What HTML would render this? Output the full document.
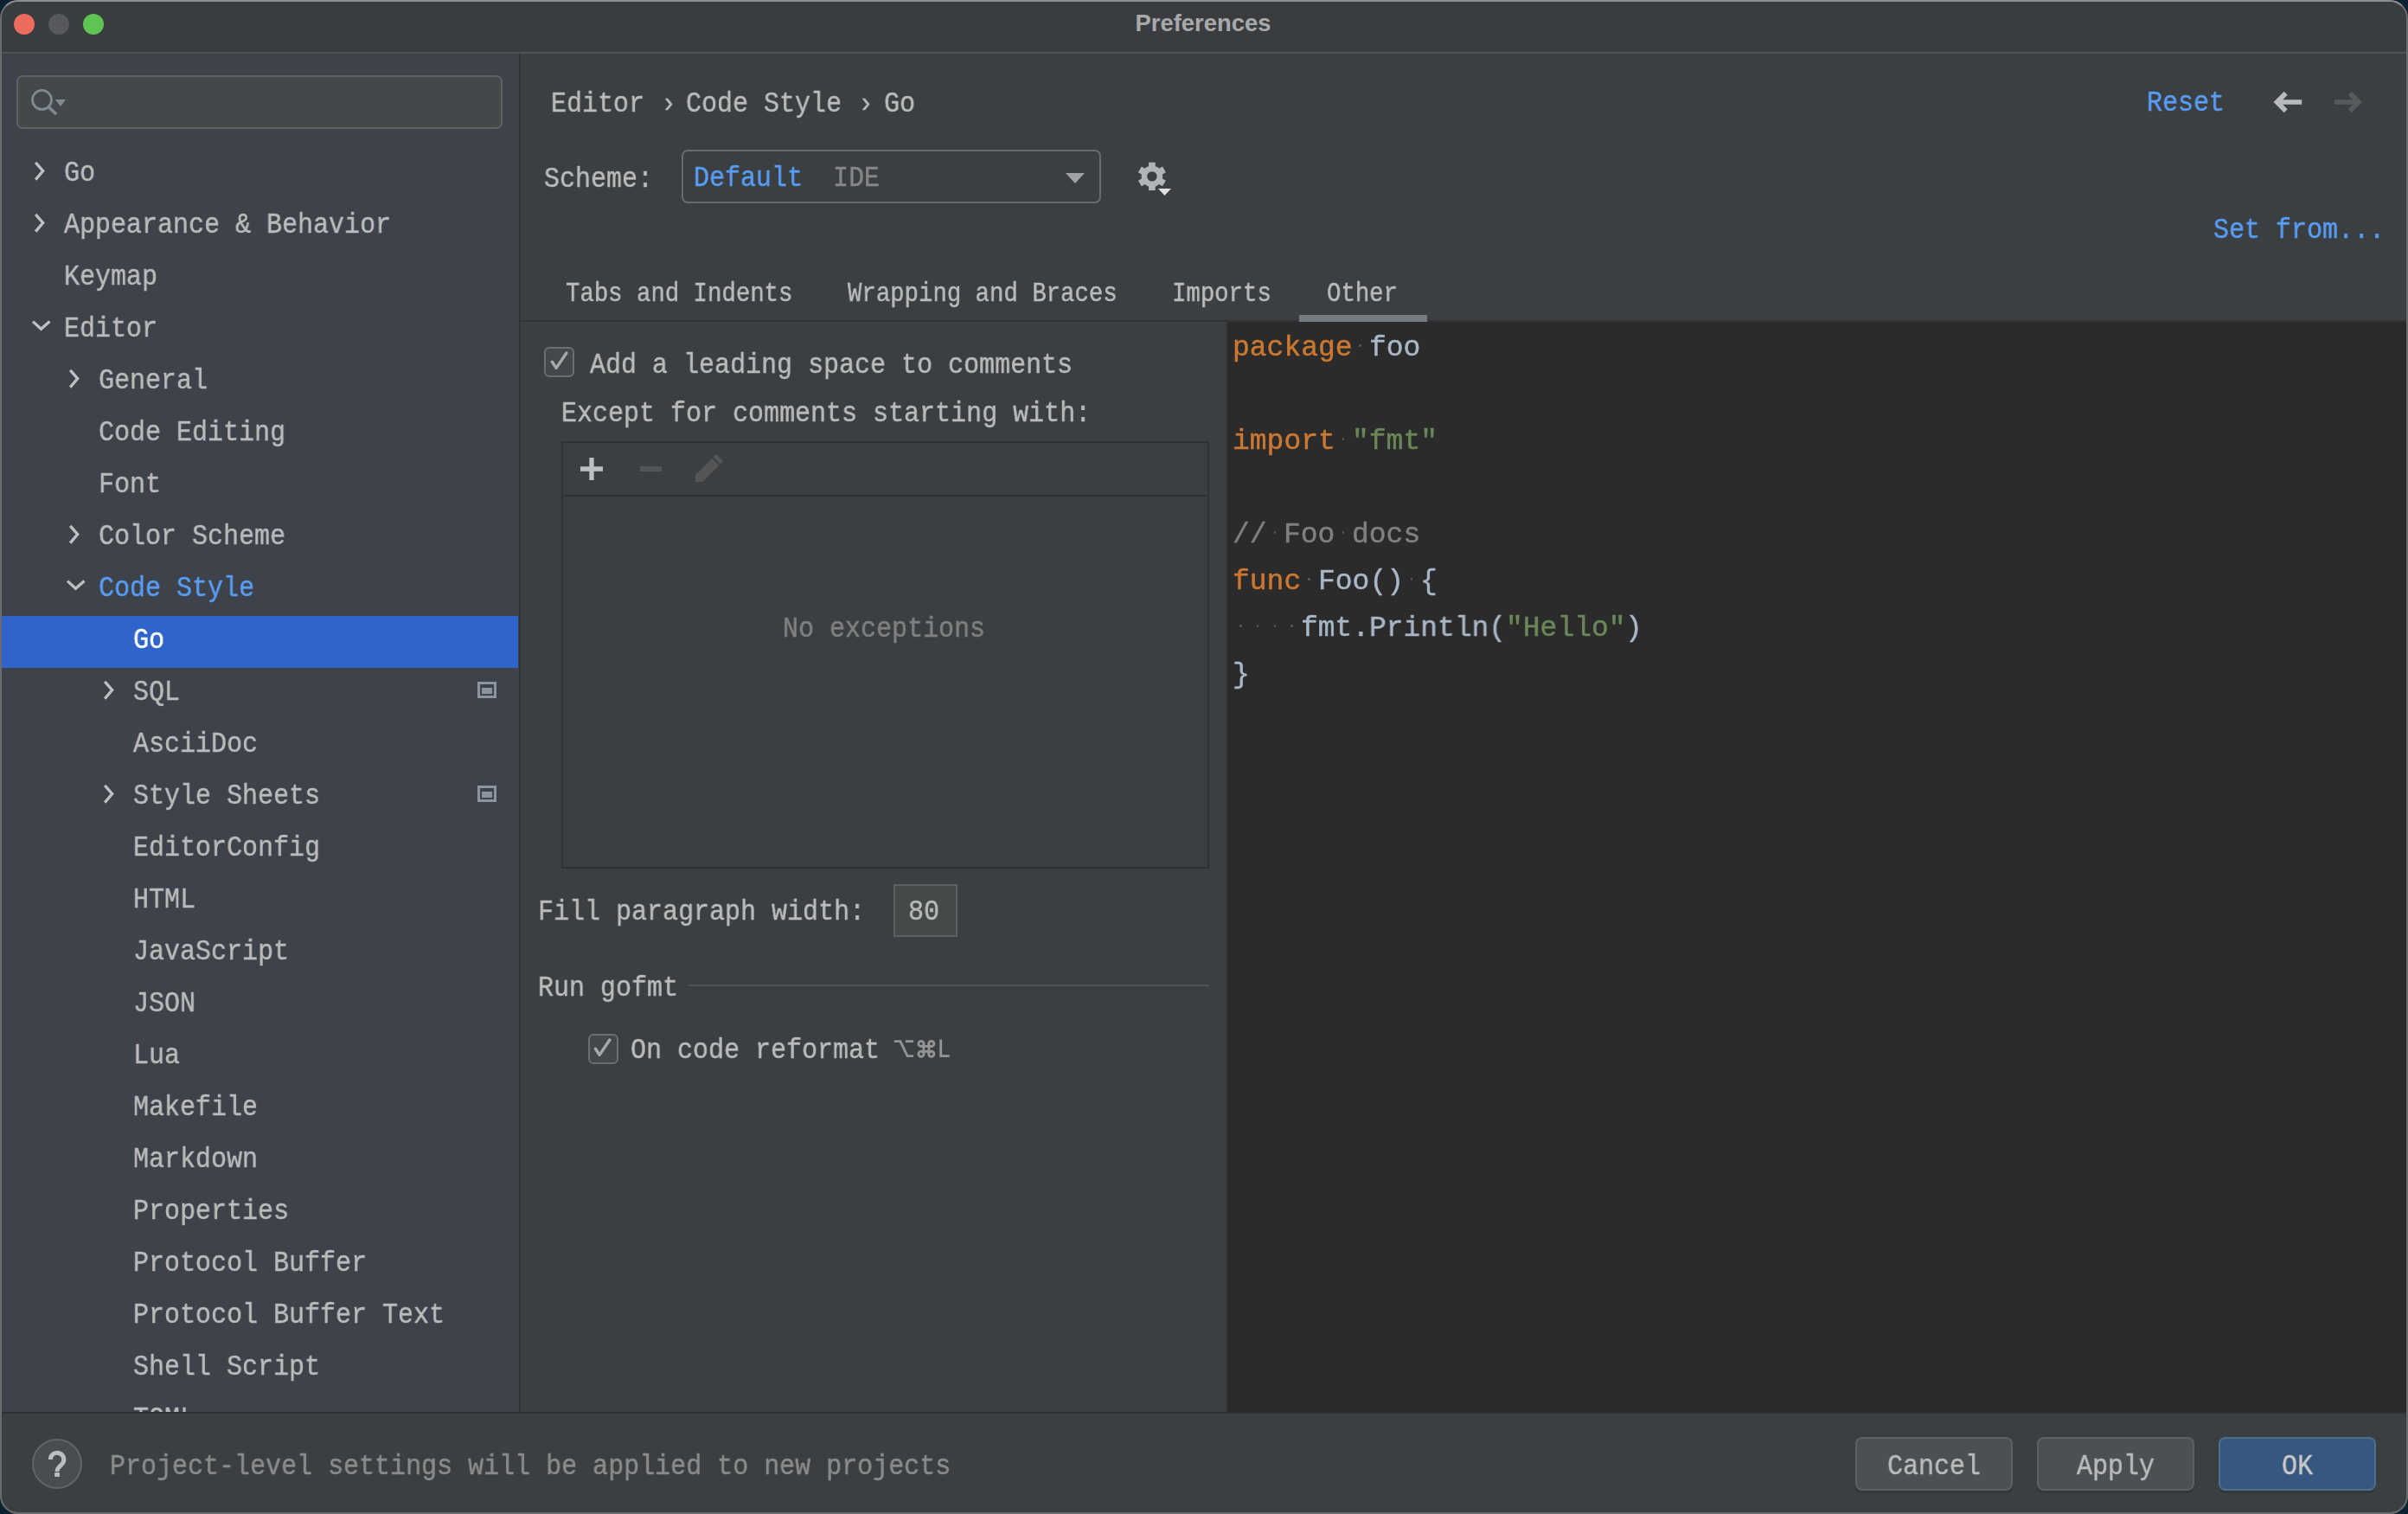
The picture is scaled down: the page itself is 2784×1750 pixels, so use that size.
<!DOCTYPE html>
<html><head><meta charset="utf-8"><style>
html,body{margin:0;padding:0;}
body{width:2784px;height:1750px;overflow:hidden;background:#0b2230;position:relative;font-family:"Liberation Mono",monospace;}
#win{position:absolute;left:0;top:0;width:2784px;height:1750px;border-radius:21px;overflow:hidden;background:#3c3f41;}
#frame{position:absolute;left:0;top:0;width:2784px;height:1750px;border-radius:21px;box-sizing:border-box;border:2px solid #6a6b6d;border-top-color:#8e8f91;pointer-events:none;}
.t{position:absolute;white-space:pre;line-height:44px;transform-origin:0 0;will-change:transform;-webkit-text-stroke:0.45px currentColor;}
#title{position:absolute;left:0;top:0;width:2784px;height:60px;background:#3a3d40;border-bottom:2px solid #515254;}
.dot{position:absolute;width:24px;height:24px;border-radius:50%;}
#ttl{position:absolute;left:0;width:2782px;top:10px;text-align:center;font-family:"Liberation Sans",sans-serif;font-weight:bold;font-size:27.4px;line-height:34px;color:#a8a9ab;}
#side{position:absolute;left:0;top:62px;width:600px;height:1570px;background:#3e424b;}
#sdiv{position:absolute;left:600px;top:62px;width:1px;height:1570px;background:#2f2f2e;border-right:1px solid #373838;}
#treeclip{position:absolute;left:0;top:61px;width:600px;height:1571px;overflow:hidden;}
#search{position:absolute;left:19px;top:87px;width:562px;height:62px;box-sizing:border-box;border:2px solid #5f6062;border-radius:7px;background:#45484a;}
#main{position:absolute;left:602px;top:62px;width:2182px;height:1570px;background:#3c3f41;}
#combo{position:absolute;left:788px;top:173px;width:485px;height:62px;box-sizing:border-box;border:2.4px solid #6a6a6a;border-radius:7px;}
#tabline{position:absolute;left:601px;top:370px;width:2183px;height:2px;background:#313335;}
.cb{position:absolute;width:35px;height:35px;box-sizing:border-box;border:2.7px solid #6d6d6d;border-radius:6px;background:#43484b;}

#table{position:absolute;left:649px;top:510px;width:749px;height:494px;box-sizing:border-box;border:2px solid #2f3133;}
#num{position:absolute;left:1033px;top:1022px;width:74px;height:61px;box-sizing:border-box;border:2px solid #5e6060;background:#45494a;}
#editor{position:absolute;left:1418px;top:372px;width:1366px;height:1260px;background:#2b2b2b;border-left:2px solid #303030;box-sizing:border-box;}
.ws{position:absolute;width:2.6px;height:2.6px;border-radius:50%;background:#5a5a5a;}
#bottom{position:absolute;left:0;top:1632px;width:2784px;height:118px;background:#3c3f41;border-top:2px solid #2f3133;}
#help{position:absolute;left:37px;top:1663px;width:58px;height:58px;box-sizing:border-box;border:2px solid #626466;border-radius:50%;background:#4a4d50;color:#c4c4c4;font-family:"Liberation Sans",sans-serif;font-weight:bold;font-size:34px;line-height:53px;text-align:center;}
.btn{position:absolute;top:1661px;width:182px;height:62px;box-sizing:border-box;border:2px solid #5e6062;border-radius:8px;background:#4c5052;box-shadow:0 3px 0 #35373a;}
.btn.ok{background:#365880;border-color:#4c708c;color:#dddddd;}
</style></head><body>
<div id="win">
<div id="title"></div><div class="dot" style="left:16px;top:16px;background:#ec6a5e"></div><div class="dot" style="left:56px;top:16px;background:#56585b"></div><div class="dot" style="left:96px;top:16px;background:#5fc454"></div><div id="ttl">Preferences</div><div id="side"></div><div id="sdiv"></div><div id="search"></div><svg style="position:absolute;left:34px;top:100px" width="44" height="36" viewBox="0 0 44 36">
<circle cx="14.5" cy="15.4" r="11" fill="none" stroke="#7f8b91" stroke-width="2.8"/>
<line x1="22" y1="23.5" x2="31" y2="32" stroke="#7f8b91" stroke-width="3.6"/>
<path d="M29.8 15 L42 15 L36 23 Z" fill="#7f8b91"/>
</svg><div id="treeclip"><div class="t" style="left:73.5px;top:117.3px;font-size:34px;transform:scaleX(0.8824);color:#bbbbbb;">Go</div>
<svg style="position:absolute;left:38px;top:124px" width="18" height="28" viewBox="0 0 18 28"><path d="M3.2 2.9 L11.7 12.6 L3.2 22.6" fill="none" stroke="#bfc0c2" stroke-width="3.3"/></svg><div class="t" style="left:73.5px;top:177.3px;font-size:34px;transform:scaleX(0.8824);color:#bbbbbb;">Appearance &amp; Behavior</div>
<svg style="position:absolute;left:38px;top:184px" width="18" height="28" viewBox="0 0 18 28"><path d="M3.2 2.9 L11.7 12.6 L3.2 22.6" fill="none" stroke="#bfc0c2" stroke-width="3.3"/></svg><div class="t" style="left:73.5px;top:237.3px;font-size:34px;transform:scaleX(0.8824);color:#bbbbbb;">Keymap</div>
<div class="t" style="left:73.5px;top:297.3px;font-size:34px;transform:scaleX(0.8824);color:#bbbbbb;">Editor</div>
<svg style="position:absolute;left:35px;top:307px" width="28" height="18" viewBox="0 0 28 18"><path d="M3 3.6 L12.5 12.3 L22.5 3.4" fill="none" stroke="#bfc0c2" stroke-width="3.3"/></svg><div class="t" style="left:113.5px;top:357.3px;font-size:34px;transform:scaleX(0.8824);color:#bbbbbb;">General</div>
<svg style="position:absolute;left:78px;top:364px" width="18" height="28" viewBox="0 0 18 28"><path d="M3.2 2.9 L11.7 12.6 L3.2 22.6" fill="none" stroke="#bfc0c2" stroke-width="3.3"/></svg><div class="t" style="left:113.5px;top:417.3px;font-size:34px;transform:scaleX(0.8824);color:#bbbbbb;">Code Editing</div>
<div class="t" style="left:113.5px;top:477.3px;font-size:34px;transform:scaleX(0.8824);color:#bbbbbb;">Font</div>
<div class="t" style="left:113.5px;top:537.3px;font-size:34px;transform:scaleX(0.8824);color:#bbbbbb;">Color Scheme</div>
<svg style="position:absolute;left:78px;top:544px" width="18" height="28" viewBox="0 0 18 28"><path d="M3.2 2.9 L11.7 12.6 L3.2 22.6" fill="none" stroke="#bfc0c2" stroke-width="3.3"/></svg><div class="t" style="left:113.5px;top:597.3px;font-size:34px;transform:scaleX(0.8824);color:#589df6;">Code Style</div>
<svg style="position:absolute;left:75px;top:607px" width="28" height="18" viewBox="0 0 28 18"><path d="M3 3.6 L12.5 12.3 L22.5 3.4" fill="none" stroke="#bfc0c2" stroke-width="3.3"/></svg><div style="position:absolute;left:0;top:651px;width:599px;height:60px;background:#2f65ca"></div><div class="t" style="left:153.5px;top:657.3px;font-size:34px;transform:scaleX(0.8824);color:#ffffff;">Go</div>
<div class="t" style="left:153.5px;top:717.3px;font-size:34px;transform:scaleX(0.8824);color:#bbbbbb;">SQL</div>
<svg style="position:absolute;left:118px;top:724px" width="18" height="28" viewBox="0 0 18 28"><path d="M3.2 2.9 L11.7 12.6 L3.2 22.6" fill="none" stroke="#bfc0c2" stroke-width="3.3"/></svg><svg style="position:absolute;left:552px;top:727px" width="22" height="19" viewBox="0 0 22 19"><rect x="1.5" y="1.5" width="19" height="16" fill="none" stroke="#8a959d" stroke-width="3"/><rect x="5" y="7" width="12" height="7" fill="#8a959d"/></svg><div class="t" style="left:153.5px;top:777.3px;font-size:34px;transform:scaleX(0.8824);color:#bbbbbb;">AsciiDoc</div>
<div class="t" style="left:153.5px;top:837.3px;font-size:34px;transform:scaleX(0.8824);color:#bbbbbb;">Style Sheets</div>
<svg style="position:absolute;left:118px;top:844px" width="18" height="28" viewBox="0 0 18 28"><path d="M3.2 2.9 L11.7 12.6 L3.2 22.6" fill="none" stroke="#bfc0c2" stroke-width="3.3"/></svg><svg style="position:absolute;left:552px;top:847px" width="22" height="19" viewBox="0 0 22 19"><rect x="1.5" y="1.5" width="19" height="16" fill="none" stroke="#8a959d" stroke-width="3"/><rect x="5" y="7" width="12" height="7" fill="#8a959d"/></svg><div class="t" style="left:153.5px;top:897.3px;font-size:34px;transform:scaleX(0.8824);color:#bbbbbb;">EditorConfig</div>
<div class="t" style="left:153.5px;top:957.3px;font-size:34px;transform:scaleX(0.8824);color:#bbbbbb;">HTML</div>
<div class="t" style="left:153.5px;top:1017.3px;font-size:34px;transform:scaleX(0.8824);color:#bbbbbb;">JavaScript</div>
<div class="t" style="left:153.5px;top:1077.3px;font-size:34px;transform:scaleX(0.8824);color:#bbbbbb;">JSON</div>
<div class="t" style="left:153.5px;top:1137.3px;font-size:34px;transform:scaleX(0.8824);color:#bbbbbb;">Lua</div>
<div class="t" style="left:153.5px;top:1197.3px;font-size:34px;transform:scaleX(0.8824);color:#bbbbbb;">Makefile</div>
<div class="t" style="left:153.5px;top:1257.3px;font-size:34px;transform:scaleX(0.8824);color:#bbbbbb;">Markdown</div>
<div class="t" style="left:153.5px;top:1317.3px;font-size:34px;transform:scaleX(0.8824);color:#bbbbbb;">Properties</div>
<div class="t" style="left:153.5px;top:1377.3px;font-size:34px;transform:scaleX(0.8824);color:#bbbbbb;">Protocol Buffer</div>
<div class="t" style="left:153.5px;top:1437.3px;font-size:34px;transform:scaleX(0.8824);color:#bbbbbb;">Protocol Buffer Text</div>
<div class="t" style="left:153.5px;top:1497.3px;font-size:34px;transform:scaleX(0.8824);color:#bbbbbb;">Shell Script</div>
<div class="t" style="left:153.5px;top:1557.3px;font-size:34px;transform:scaleX(0.8824);color:#bbbbbb;">TOML</div>
</div><div id="main"></div><div class="t" style="left:637.0px;top:97.8px;font-size:34px;transform:scaleX(0.8824);color:#bbbbbb;">Editor</div>
<div class="t" style="left:764.0px;top:97.8px;font-size:34px;transform:scaleX(0.8824);color:#bbbbbb;">›</div>
<div class="t" style="left:793.0px;top:97.8px;font-size:34px;transform:scaleX(0.8824);color:#bbbbbb;">Code Style</div>
<div class="t" style="left:992.0px;top:97.8px;font-size:34px;transform:scaleX(0.8824);color:#bbbbbb;">›</div>
<div class="t" style="left:1021.5px;top:97.8px;font-size:34px;transform:scaleX(0.8824);color:#bbbbbb;">Go</div>
<div class="t" style="left:2482.3px;top:97.3px;font-size:34px;transform:scaleX(0.8824);color:#589df6;">Reset</div>
<svg style="position:absolute;left:2615px;top:95px" width="130" height="45" viewBox="0 0 130 45">
<path d="M27.7 12.8 L17.5 23 L27.7 33.2 M17.5 23 L46.2 23" fill="none" stroke="#b9babb" stroke-width="5.6"/>
<path d="M101.9 12.8 L112.1 23 L101.9 33.2 M112.1 23 L84 23" fill="none" stroke="#58595a" stroke-width="5.6"/></svg><div class="t" style="left:629.0px;top:185.0px;font-size:34px;transform:scaleX(0.8824);color:#bbbbbb;">Scheme:</div>
<div id="combo"></div><div class="t" style="left:802.3px;top:183.5px;font-size:34px;transform:scaleX(0.8824);color:#589df6;">Default</div>
<div class="t" style="left:963.0px;top:183.5px;font-size:34px;transform:scaleX(0.8824);color:#878787;">IDE</div>
<svg style="position:absolute;left:1230px;top:199px" width="26" height="14" viewBox="0 0 26 14"><path d="M2 1 L24 1 L13 13 Z" fill="#a0a2a6"/></svg><svg style="position:absolute;left:1312px;top:184px" width="48" height="46" viewBox="0 0 48 46">
<g transform="translate(19.9,19.9)" fill="#b3b4b6"><circle r="12.3"/><rect x="-3.85" y="-16.2" width="7.7" height="32.4" transform="rotate(0)"/><rect x="-3.85" y="-16.2" width="7.7" height="32.4" transform="rotate(60)"/><rect x="-3.85" y="-16.2" width="7.7" height="32.4" transform="rotate(120)"/><circle r="5.7" fill="#3c3f41"/></g>
<path d="M27 34 L42 34 L34.5 42 Z" fill="#e0e0e0"/>
</svg><div class="t" style="left:2559.0px;top:243.5px;font-size:34px;transform:scaleX(0.8824);color:#589df6;">Set from...</div>
<div id="tabline"></div><div class="t" style="left:653.5px;top:317.9px;font-size:32px;transform:scaleX(0.8542);color:#bbbbbb;">Tabs and Indents</div>
<div class="t" style="left:979.5px;top:317.9px;font-size:32px;transform:scaleX(0.8542);color:#bbbbbb;">Wrapping and Braces</div>
<div class="t" style="left:1355.0px;top:317.9px;font-size:32px;transform:scaleX(0.8542);color:#bbbbbb;">Imports</div>
<div class="t" style="left:1534.0px;top:317.9px;font-size:32px;transform:scaleX(0.8542);color:#bbbbbb;">Other</div>
<div style="position:absolute;left:1502px;top:364px;width:148px;height:8px;background:#747a80"></div><div class="cb" style="left:629.3px;top:401px"><svg style="position:absolute;left:-2.7px;top:-2.7px" width="35" height="35" viewBox="0 0 35 35"><path d="M9.4 18.2 L14.1 25.4 L25.9 8" fill="none" stroke="#a9a9a9" stroke-width="3.4" stroke-linecap="round" stroke-linejoin="round"/></svg></div><div class="t" style="left:682.0px;top:400.3px;font-size:34px;transform:scaleX(0.8824);color:#bbbbbb;">Add a leading space to comments</div>
<div class="t" style="left:648.5px;top:455.8px;font-size:34px;transform:scaleX(0.8824);color:#bbbbbb;">Except for comments starting with:</div>
<div id="table"></div><div style="position:absolute;left:649px;top:572px;width:748px;height:2px;background:#2f3133"></div><svg style="position:absolute;left:668px;top:525px" width="32" height="34" viewBox="0 0 32 34">
<path d="M3 17 L29 17 M16 4 L16 30" stroke="#bebfc1" stroke-width="5.3"/></svg><div style="position:absolute;left:740px;top:539.2px;width:25px;height:5.5px;background:#545556"></div><svg style="position:absolute;left:802px;top:522px" width="38" height="38" viewBox="0 0 38 38">
<path d="M2 35 L2 27 L26 3 L34 11 L10 35 Z" fill="#555556"/><path d="M22 7 L30 15" stroke="#3c3f41" stroke-width="2"/></svg><div class="t" style="left:905.0px;top:705.2px;font-size:34px;transform:scaleX(0.8824);color:#808080;">No exceptions</div>
<div class="t" style="left:622.0px;top:1031.8px;font-size:34px;transform:scaleX(0.8824);color:#bbbbbb;">Fill paragraph width:</div>
<div id="num"></div><div class="t" style="left:1050.0px;top:1031.8px;font-size:34px;transform:scaleX(0.8824);color:#bbbbbb;">80</div>
<div class="t" style="left:622.0px;top:1119.7px;font-size:34px;transform:scaleX(0.8824);color:#bbbbbb;">Run gofmt</div>
<div style="position:absolute;left:796px;top:1138px;width:602px;height:2px;background:#505254"></div><div class="cb" style="left:679.5px;top:1195px"><svg style="position:absolute;left:-2.7px;top:-2.7px" width="35" height="35" viewBox="0 0 35 35"><path d="M9.4 18.2 L14.1 25.4 L25.9 8" fill="none" stroke="#a9a9a9" stroke-width="3.4" stroke-linecap="round" stroke-linejoin="round"/></svg></div><div class="t" style="left:729.0px;top:1192.3px;font-size:34px;transform:scaleX(0.8824);color:#bbbbbb;">On code reformat</div>
<svg style="position:absolute;left:1030px;top:1198px" width="72" height="30" viewBox="0 0 72 30">
<g fill="none" stroke="#949494" stroke-width="2.8">
<path d="M3.8 5.6 H10.9 L19.1 22.7 H26.1 M16.9 5.6 H26.1"/>
<path d="M37.9 8.4 V20.2 M43.9 8.4 V20.2 M35 11.3 H46.8 M35 17.3 H46.8"/>
<circle cx="35" cy="8.4" r="3.1"/><circle cx="46.8" cy="8.4" r="3.1"/><circle cx="35" cy="20.2" r="3.1"/><circle cx="46.8" cy="20.2" r="3.1"/>
<path d="M57.7 3.6 V22.7 H67.7"/>
</g></svg><div id="editor"></div><div class="t" style="left:1424.8px;top:381.2px;font-size:33px;transform:scaleX(0.9975);color:#cc7832;">package</div>
<div class="ws" style="left:1571.4px;top:398px"></div><div class="t" style="left:1582.8px;top:381.2px;font-size:33px;transform:scaleX(0.9975);color:#a9b7c6;">foo</div>
<div class="t" style="left:1424.8px;top:489.2px;font-size:33px;transform:scaleX(0.9975);color:#cc7832;">import</div>
<div class="ws" style="left:1551.7px;top:506px"></div><div class="t" style="left:1563.0px;top:489.2px;font-size:33px;transform:scaleX(0.9975);color:#6a8759;">"fmt"</div>
<div class="t" style="left:1424.8px;top:597.2px;font-size:33px;transform:scaleX(0.9975);color:#808080;">//</div>
<div class="ws" style="left:1472.7px;top:614px"></div><div class="t" style="left:1484.0px;top:597.2px;font-size:33px;transform:scaleX(0.9975);color:#808080;">Foo</div>
<div class="ws" style="left:1551.7px;top:614px"></div><div class="t" style="left:1563.0px;top:597.2px;font-size:33px;transform:scaleX(0.9975);color:#808080;">docs</div>
<div class="t" style="left:1424.8px;top:651.2px;font-size:33px;transform:scaleX(0.9975);color:#cc7832;">func</div>
<div class="ws" style="left:1512.2px;top:668px"></div><div class="t" style="left:1523.5px;top:651.2px;font-size:33px;transform:scaleX(0.9975);color:#a9b7c6;">Foo()</div>
<div class="ws" style="left:1630.7px;top:668px"></div><div class="t" style="left:1642.0px;top:651.2px;font-size:33px;transform:scaleX(0.9975);color:#a9b7c6;">{</div>
<div class="ws" style="left:1433.2px;top:722px"></div><div class="ws" style="left:1452.9px;top:722px"></div><div class="ws" style="left:1472.7px;top:722px"></div><div class="ws" style="left:1492.4px;top:722px"></div><div class="t" style="left:1503.8px;top:705.2px;font-size:33px;transform:scaleX(0.9975);color:#a9b7c6;">fmt.Println(</div>
<div class="t" style="left:1740.8px;top:705.2px;font-size:33px;transform:scaleX(0.9975);color:#6a8759;">"Hello"</div>
<div class="t" style="left:1879.0px;top:705.2px;font-size:33px;transform:scaleX(0.9975);color:#a9b7c6;">)</div>
<div class="t" style="left:1424.8px;top:759.2px;font-size:33px;transform:scaleX(0.9975);color:#a9b7c6;">}</div>
<div id="bottom"></div><div id="help"></div><svg style="position:absolute;left:30px;top:1655px" width="80" height="75" viewBox="0 0 80 75">
<path d="M28.3 32 A7.75 7.75 0 1 1 41.5 37.5 L38.3 40.7 Q36 43 36 45.5 L36 46" fill="none" stroke="#bdbec0" stroke-width="5"/>
<rect x="33.2" y="47" width="5.7" height="5" fill="#bdbec0"/></svg><div class="t" style="left:127.0px;top:1673.0px;font-size:34px;transform:scaleX(0.8824);color:#8b8b8b;">Project-level settings will be applied to new projects</div>
<div class="btn" style="left:2145px"></div><div class="t" style="left:2182.0px;top:1673.1px;font-size:34px;transform:scaleX(0.8824);color:#bbbbbb;">Cancel</div>
<div class="btn" style="left:2355px"></div><div class="t" style="left:2401.0px;top:1673.1px;font-size:34px;transform:scaleX(0.8824);color:#bbbbbb;">Apply</div>
<div class="btn ok" style="left:2565px"></div><div class="t" style="left:2638.0px;top:1673.1px;font-size:34px;transform:scaleX(0.8824);color:#c8c8c8;">OK</div>

</div>
<div id="frame"></div>
</body></html>
